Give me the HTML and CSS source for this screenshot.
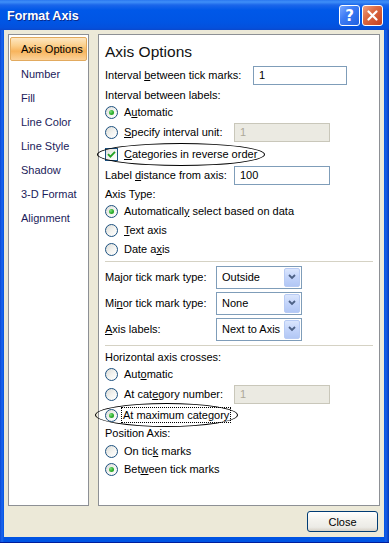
FILE: index.html
```html
<!DOCTYPE html>
<html>
<head>
<meta charset="utf-8">
<link rel="stylesheet" href="styles.css">
</head>
<body>
<div class="window">
  <div class="titlebar">
    <span class="title">Format Axis</span>
    <div class="tb-buttons">
      <span class="tb-btn help">?</span>
      <span class="tb-btn close"><svg width="11" height="11" viewBox="0 0 11 11"><path d="M1.5 1.5 L9.5 9.5 M9.5 1.5 L1.5 9.5" stroke="#fff" stroke-width="2.2" stroke-linecap="round"/></svg></span>
    </div>
  </div>
  <div class="frame">
    <div class="panels">
      <ul class="nav">
        <li class="selected">Axis Options</li>
        <li>Number</li>
        <li>Fill</li>
        <li>Line Color</li>
        <li>Line Style</li>
        <li>Shadow</li>
        <li>3-D Format</li>
        <li>Alignment</li>
      </ul>
      <div class="content">
        <div class="heading">Axis Options</div>
        <div class="row r-tick"><span class="lbl w148"><span>Interval <u>b</u>etween tick marks:</span></span><span class="input w94">1</span></div>
        <div class="row h18"><span>Interval between labels:</span></div>
        <div class="row h16"><span class="radio on"></span><span>A<u>u</u>tomatic</span></div>
        <div class="row h24"><span class="lbl w129"><span class="radio"></span><span><u>S</u>pecify interval unit:</span></span><span class="input w96 disabled">1</span></div>
        <div class="row h20 circled c1"><span class="check"><svg width="9" height="9" viewBox="0 0 9 9"><path d="M1 4.2 L3.4 6.6 L8 1.8" fill="none" stroke="#21a121" stroke-width="1.8"/></svg></span><span><u>C</u>ategories in reverse order</span></div>
        <div class="row h22"><span class="lbl w129"><span>Label <u>d</u>istance from axis:</span></span><span class="input w96">100</span></div>
        <div class="row h16"><span>Axis Type:</span></div>
        <div class="row h18"><span class="radio on"></span><span>Automaticall<u>y</u> select based on data</span></div>
        <div class="row h20"><span class="radio"></span><span><u>T</u>ext axis</span></div>
        <div class="row h18"><span class="radio"></span><span>Date a<u>x</u>is</span></div>
        <div class="sep"></div>
        <div class="row h26"><span class="lbl w111"><span>Ma<u>j</u>or tick mark type:</span></span><span class="select"><span>Outside</span><span class="dd"><svg width="8" height="6" viewBox="0 0 8 6"><path d="M1 1 L4 4 L7 1" fill="none" stroke="#4d6185" stroke-width="1.8"/></svg></span></span></div>
        <div class="row h26"><span class="lbl w111"><span>Mi<u>n</u>or tick mark type:</span></span><span class="select"><span>None</span><span class="dd"><svg width="8" height="6" viewBox="0 0 8 6"><path d="M1 1 L4 4 L7 1" fill="none" stroke="#4d6185" stroke-width="1.8"/></svg></span></span></div>
        <div class="row h26"><span class="lbl w111"><span><u>A</u>xis labels:</span></span><span class="select"><span>Next to Axis</span><span class="dd"><svg width="8" height="6" viewBox="0 0 8 6"><path d="M1 1 L4 4 L7 1" fill="none" stroke="#4d6185" stroke-width="1.8"/></svg></span></span></div>
        <div class="sep"></div>
        <div class="row h18"><span>Horizontal axis crosses:</span></div>
        <div class="row h16"><span class="radio"></span><span>Aut<u>o</u>matic</span></div>
        <div class="row h24"><span class="lbl w129"><span class="radio"></span><span>At cat<u>e</u>gory number:</span></span><span class="input w96 disabled">1</span></div>
        <div class="row h18 circled c2"><span class="radio on"></span><span class="focus">At maximum cate<u>g</u>ory</span></div>
        <div class="row h18"><span>Position Axis:</span></div>
        <div class="row h18"><span class="radio"></span><span>On tic<u>k</u> marks</span></div>
        <div class="row h18"><span class="radio on"></span><span>Bet<u>w</u>een tick marks</span></div>
      </div>
    </div>
    <div class="footer"><span class="btn">Close</span></div>
  </div>
</div>
</body>
</html>
```

FILE: styles.css
```css
html, body {
  margin: 0;
  padding: 0;
  background: #0054e3;
}
body {
  font-family: "Liberation Sans", Arial, sans-serif;
  font-size: 11px;
  color: #000;
}
u { text-decoration: underline; text-underline-offset: 1px; }
.window {
  width: 389px;
  height: 543px;
  display: flex;
  flex-direction: column;
  background: linear-gradient(to right, #0a48d4 0, #1c66ee 2px, #0054e3 4px, #0054e3 384px, #1a5ee6 386px, #0039b8 389px);
  border-bottom: 1px solid #001d9c;
  box-sizing: border-box;
}
.titlebar {
  height: 30px;
  flex: none;
  display: flex;
  align-items: center;
  justify-content: space-between;
  padding: 0 6px 0 7px;
  background: linear-gradient(to bottom, #2a78f0 0, #3f8ff8 2px, #1b66ea 5px, #0058e8 10px, #0055e4 22px, #0450dc 28px, #0a48cc 30px);
}
.title {
  color: #fff;
  font-weight: bold;
  font-size: 12.5px;
  text-shadow: 1px 1px 0 #0a2a8c;
  padding-top: 1px;
}
.tb-buttons {
  display: flex;
  gap: 2px;
  padding-top: 1px;
}
.tb-btn {
  width: 19px;
  height: 19px;
  border: 1px solid #fff;
  border-radius: 3px;
  display: flex;
  align-items: center;
  justify-content: center;
  color: #fff;
  font-weight: bold;
  font-size: 15px;
  font-family: "DejaVu Sans", sans-serif;
}
.help {
  background: linear-gradient(135deg, #7aa8ff 0, #3d7cf5 40%, #1f5fe0 100%);
}
.close {
  background: linear-gradient(135deg, #f0a080 0, #dc6a42 40%, #c54020 100%);
}
.frame {
  flex: 1;
  margin: 0 5px 5px 4px;
  background: #ece9d8;
  display: flex;
  flex-direction: column;
  padding: 4px 4px 0 4px;
}
.panels {
  display: flex;
  gap: 9px;
  height: 472px;
}
.nav {
  list-style: none;
  margin: 0;
  width: 81px;
  box-sizing: border-box;
  background: #fff;
  border: 1px solid #8d9095;
  padding: 2px 1px;
}
.nav li {
  height: 24px;
  line-height: 24px;
  padding-left: 11px;
  color: #1b1b5a;
}
.nav li.selected {
  height: 22px;
  line-height: 22px;
  padding-left: 10px;
  margin-bottom: 1px;
  border: 1px solid #e2aa5e;
  border-radius: 2px;
  color: #000;
  background: linear-gradient(to bottom, #fde7c2 0, #fbcf8b 35%, #f8b45c 60%, #fbd29a 100%);
}
.content {
  width: 282px;
  box-sizing: border-box;
  background: #fff;
  border: 1px solid #8d9095;
  padding: 7px 6px;
}
.heading {
  height: 20px;
  line-height: 20px;
  font-size: 15.5px;
  color: #111;
}
.row {
  display: flex;
  align-items: center;
  height: 18px;
  white-space: nowrap;
}
.r-tick { height: 22px; margin-top: 2px; }
.h16 { height: 16px; }
.h18 { height: 18px; }
.h20 { height: 20px; }
.h22 { height: 22px; }
.h24 { height: 24px; }
.h26 { height: 26px; }
.lbl {
  display: flex;
  align-items: center;
  flex: none;
}
.w148 { width: 148px; }
.w129 { width: 129px; }
.w111 { width: 111px; }
.input {
  height: 19px;
  box-sizing: border-box;
  border: 1px solid #7f9db9;
  background: #fff;
  padding-left: 5px;
  line-height: 17px;
}
.w94 { width: 94px; }
.w96 { width: 96px; }
.input.disabled {
  background: #ebeae2;
  border-color: #c9c7ba;
  color: #aca899;
}
.radio {
  width: 13px;
  height: 13px;
  box-sizing: border-box;
  border: 1px solid #1c5180;
  border-radius: 50%;
  background: linear-gradient(135deg, #dcdcd7 0, #f4f4f1 55%, #fff 100%);
  margin-right: 6px;
  display: flex;
  align-items: center;
  justify-content: center;
  flex: none;
}
.radio.on::after {
  content: "";
  width: 5px;
  height: 5px;
  border-radius: 50%;
  background: radial-gradient(circle at 35% 35%, #7fe07f 0, #2fb02f 50%, #1a901a 100%);
}
.check {
  width: 13px;
  height: 13px;
  box-sizing: border-box;
  border: 1px solid #1c5180;
  background: linear-gradient(135deg, #dcdcd7 0, #f4f4f1 55%, #fff 100%);
  margin-right: 6px;
  display: flex;
  align-items: center;
  justify-content: center;
  flex: none;
}
.sep {
  border-top: 1px solid #d5d2c4;
  margin: 3px 0 2px;
}
.select {
  width: 86px;
  height: 23px;
  box-sizing: border-box;
  border: 1px solid #7f9db9;
  background: #fff;
  display: flex;
  align-items: center;
  justify-content: space-between;
  padding: 1px 1px 1px 5px;
}
.dd {
  width: 16px;
  height: 19px;
  box-sizing: border-box;
  border: 1px solid #b8cbf4;
  border-radius: 2px;
  background: linear-gradient(to bottom, #dbe6fd 0, #c3d4fa 50%, #b2c7f5 100%);
  display: flex;
  align-items: center;
  justify-content: center;
}
.circled { position: relative; }
.circled::after {
  content: "";
  position: absolute;
  border: 1px solid #000;
  border-radius: 50%;
  pointer-events: none;
}
.c1::after {
  left: -8px;
  top: -1px;
  width: 166px;
  height: 21px;
}
.c2::after {
  left: -10px;
  top: -3px;
  width: 141px;
  height: 22px;
}
.focus {
  outline: 1px dotted #000;
  outline-offset: 0;
  padding: 0 1px;
  margin-left: -2px;
  line-height: 14px;
}
.footer {
  display: flex;
  justify-content: flex-end;
  padding: 5px 2px 0 0;
}
.btn {
  width: 71px;
  height: 21px;
  box-sizing: border-box;
  border: 1px solid #003c74;
  border-radius: 3px;
  background: linear-gradient(to bottom, #ffffff 0, #f4f3ee 40%, #ecebe6 80%, #d6d0c5 100%);
  display: flex;
  align-items: center;
  justify-content: center;
  font-size: 11px;
}
```
